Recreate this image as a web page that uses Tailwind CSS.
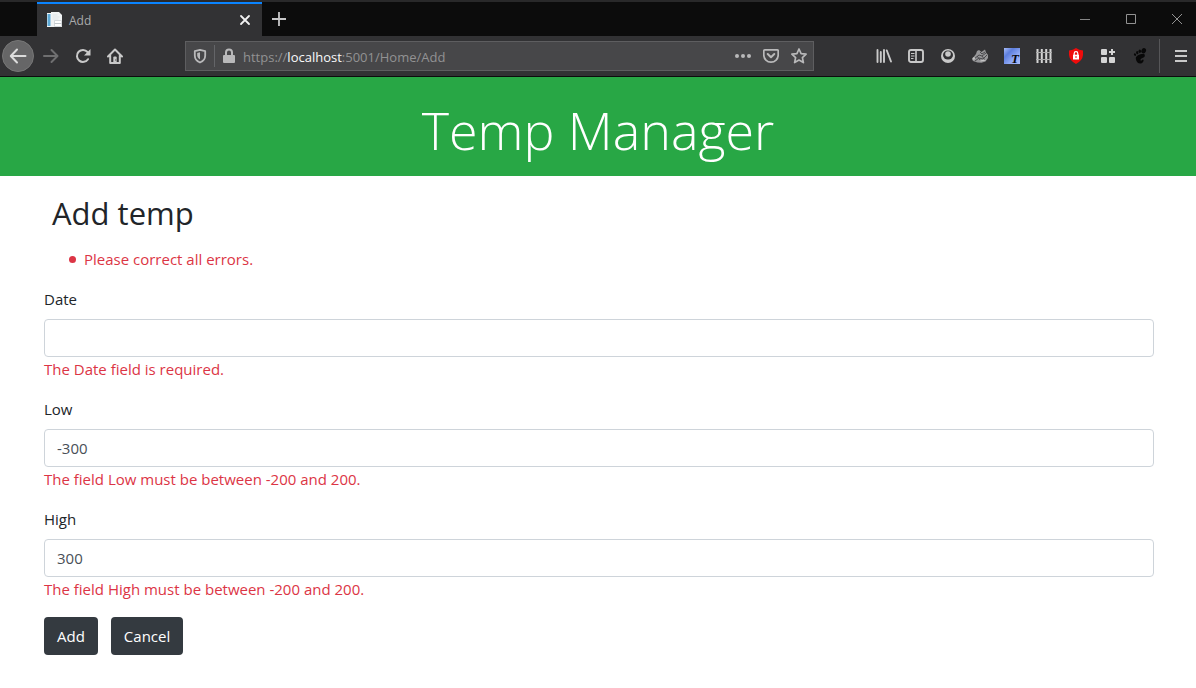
<!DOCTYPE html>
<html lang="en">
<head>
<meta charset="utf-8">
<meta name="viewport" content="width=device-width, initial-scale=1">
<title>Add</title>
<script src="https://cdn.jsdelivr.net/npm/@tailwindcss/browser@4"></script>
</head>
<body class="min-h-screen bg-white font-['Open_Sans','Noto_Sans',sans-serif] text-[15px] leading-6 text-[#212529]">

<!-- Browser window chrome -->
<div class="border-b border-[#0c0c0d] bg-[#323234] text-[#b4b4b5]">
  <div class="flex h-9 border-t-2 border-[#29292a] bg-[#0c0c0c]">
    <div class="ml-[37px] flex w-[225px] items-center border-t-2 border-[#0a84ff] bg-[#323234] pr-2 pl-[9px]">
      <svg class="size-[18px] shrink-0" viewBox="0 0 18 18" aria-hidden="true">
        <path d="M1 2h9l2 2v12H1z" fill="#f4f6f7"/><path d="M1.500 3h3v12h-3z" fill="#5da9d6"/>
        <path d="M5 1h8l3 3v12H5z" fill="#f1f3f4"/><path d="M6.500 4h5M6.500 6h7M6.500 8h6" stroke="#dfe4e7"/>
        <path d="M8.500 9.500h7v6h-7z" fill="#fff" stroke="#d5dadd"/><path d="M8.500 12.500h7" stroke="#c2c8cc"/>
      </svg>
      <span class="ml-[5px] flex-1 pt-px text-xs text-[#a9a9aa]">Add</span>
      <button class="flex size-[18px] items-center justify-center" aria-label="Close tab">
        <svg class="size-[18px]" viewBox="0 0 18 18"><path d="M5 5l8 8M13 5L5 13" stroke="#f2f2f2" stroke-width="1.800" stroke-linecap="round"/></svg>
      </button>
    </div>
    <button class="flex w-[34px] items-center justify-center" aria-label="New tab">
      <svg class="size-4" viewBox="0 0 16 16"><path d="M8 1v14M1 8h14" stroke="#c6c6c7" stroke-width="1.800"/></svg>
    </button>
    <div class="ml-auto flex">
      <button class="flex w-[46px] items-center justify-center" aria-label="Minimize"><svg class="size-3" viewBox="0 0 12 12"><path d="M1 6.500h10" stroke="#858585"/></svg></button>
      <button class="flex w-[46px] items-center justify-center" aria-label="Maximize"><svg class="size-3" viewBox="0 0 12 12"><path d="M1.500 1.500h9v9h-9z" stroke="#929292" fill="none"/></svg></button>
      <button class="flex w-[42px] items-center justify-end pr-[13px]" aria-label="Close"><svg class="size-3" viewBox="0 0 12 12"><path d="M1 1l10 10M11 1L1 11" stroke="#929292"/></svg></button>
    </div>
  </div>

  <div class="flex h-10 items-center">
    <button class="ml-[2px] flex size-8 items-center justify-center rounded-full border border-[#777] bg-[#666667]" aria-label="Back">
      <svg class="size-[18px]" viewBox="0 0 18 18"><path d="M16.500 9H2M8 2.500L1.800 9 8 15.500" fill="none" stroke="#dcdcdc" stroke-width="2" stroke-linecap="round" stroke-linejoin="round"/></svg>
    </button>
    <button class="ml-px flex size-8 items-center justify-center" aria-label="Forward">
      <svg class="size-4" viewBox="0 0 16 16"><path d="M1 8h13M8.500 2l6 6-6 6" fill="none" stroke="#6f6f70" stroke-width="2" stroke-linecap="round" stroke-linejoin="round"/></svg>
    </button>
    <button class="flex size-8 items-center justify-center" aria-label="Reload">
      <svg class="size-4" viewBox="0 0 16 16"><path d="M13 11.200A6 6 0 1 1 12.500 4" fill="none" stroke="#c9c9c9" stroke-width="2" stroke-linecap="round"/><path d="M15.500 1v6.500H9z" fill="#c9c9c9"/></svg>
    </button>
    <button class="flex size-8 items-center justify-center" aria-label="Home">
      <svg class="size-4" viewBox="0 0 16 16"><path d="M1 8.500L8 1.500l7 7M3.200 7.500V15h9.600V7.500" fill="none" stroke="#c9c9c9" stroke-width="2" stroke-linecap="round" stroke-linejoin="round"/><path d="M6.300 15V9.500q0-1 1-1h1.400q1 0 1 1V15z" fill="#c9c9c9"/><path d="M8.200 11.500h1v1h-1z" fill="#323234"/></svg>
    </button>
    <div class="ml-[54px] flex h-[30px] flex-1 items-center border border-[#5e5e60] bg-[#474749]">
      <button class="flex h-[22px] w-[29px] items-center justify-center border-r border-[#646568]" aria-label="Tracking protection">
        <svg class="size-4" viewBox="0 0 16 16"><path d="M8 1.800l5.200 1.400v4.300C13.200 11 11 13.300 8 14.500 5 13.300 2.800 11 2.800 7.500V3.200z" fill="none" stroke="#b9b9ba" stroke-width="1.800" stroke-linejoin="round"/><path d="M8 4.300v7.200C6 10.300 5.200 9 5.200 7.200V5z" fill="#b9b9ba"/></svg>
      </button>
      <svg class="ml-[6px] size-4 shrink-0" viewBox="0 0 16 16" aria-hidden="true"><path d="M5 7V4.500a3 3 0 0 1 6 0V7" fill="none" stroke="#b9b9ba" stroke-width="2"/><rect x="2" y="7" width="12" height="8" rx="1" fill="#b9b9ba"/></svg>
      <div class="ml-[6px] flex-1 pt-[2px] text-[13px] text-[#929293]" role="textbox" aria-label="Address">https://<span class="text-[#f9f9fa]">localhost</span>:5001/Home/Add</div>
      <button class="flex size-7 items-center justify-center" aria-label="Page actions"><svg class="size-4" viewBox="0 0 16 16" fill="#b9b9ba"><circle cx="2" cy="8" r="2"/><circle cx="8" cy="8" r="2"/><circle cx="14" cy="8" r="2"/></svg></button>
      <button class="flex size-7 items-center justify-center" aria-label="Save to Pocket"><svg class="size-4" viewBox="0 0 16 16" fill="none" stroke="#b9b9ba" stroke-linecap="round" stroke-linejoin="round"><path d="M1.800 1.900h12.400q1 0 1 1V7A7 7 0 0 1 .8 7V2.900q0-1 1-1z" stroke-width="1.700"/><path d="M4.700 6L8 9.200 11.300 6" stroke-width="2"/></svg></button>
      <button class="flex size-7 items-center justify-center" aria-label="Bookmark this page"><svg class="size-4" viewBox="0 0 16 16"><path d="M8 1l2.100 4.600 5 .6-3.700 3.400 1 5L8 12.100l-4.400 2.500 1-5L.9 6.200l5-.6z" fill="none" stroke="#b9b9ba" stroke-width="1.700" stroke-linejoin="round"/></svg></button>
    </div>
    <div class="ml-[54px] flex">
      <button class="flex size-8 items-center justify-center" aria-label="Library"><svg class="size-4" viewBox="0 0 16 16"><path d="M1.500 2v12M4.800 4v10M8 2v12M10.800 2.500l4.200 11" stroke="#c9c9c9" stroke-width="1.900" stroke-linecap="round"/></svg></button>
      <button class="flex size-8 items-center justify-center" aria-label="Sidebars"><svg class="size-4" viewBox="0 0 16 16"><rect x="1" y="2" width="14" height="12" rx="2" fill="none" stroke="#c9c9c9" stroke-width="1.900"/><path d="M8 2v12" stroke="#c9c9c9" stroke-width="1.600"/><path d="M3 5.500h3.500M3 8h3.500M3 10.500h2.500" stroke="#c9c9c9"/></svg></button>
      <button class="flex size-8 items-center justify-center" aria-label="Account"><svg class="size-4" viewBox="0 0 16 16"><circle cx="8" cy="8" r="7" fill="#c9c9c9"/><ellipse cx="8" cy="7" rx="5" ry="4.500" fill="#323234"/><circle cx="8" cy="6" r="2.800" fill="#c9c9c9"/></svg></button>
      <button class="flex size-8 items-center justify-center" aria-label="Privacy Badger"><svg class="size-4" viewBox="0 0 16 16"><path d="M0 11L4 6l1-3 2-1L9.500 4 13 1.500l1 3L16 7v3l-2.500 3.500-4 1.300-4-.3L1 13z" fill="#969698"/><path d="M2 11l5-4 3 1 4-3M3 13l4-3 4 1 4-4M8 4l2 2 3-2M5 8l3 4M10 8l3 4" stroke="#4a4a4d" fill="none"/><circle cx="1.800" cy="10.500" r="1.200" fill="#c4c4c4"/><path d="M8.500 13l5-1" stroke="#ccc"/></svg></button>
      <button class="flex size-8 items-center justify-center" aria-label="Text tool"><svg class="size-4" viewBox="0 0 16 16"><defs><linearGradient id="sky" x1="0" y1="0" x2="1" y2="1"><stop stop-color="#a8bdf7"/><stop offset="0.300" stop-color="#5d7ede"/><stop offset="0.650" stop-color="#90aaf5"/><stop offset="1" stop-color="#a6bbfa"/></linearGradient></defs><path d="M0 0h16v16H0z" fill="url(#sky)"/><text x="7" y="14.500" font-family="Liberation Serif" font-size="13" font-style="italic" font-weight="700" fill="#08080f">T</text></svg></button>
      <button class="flex size-8 items-center justify-center" aria-label="Fence extension"><svg class="size-4" viewBox="0 0 16 16"><path d="M1.500 1v14M5.800 1v14M10.200 1v14M14.500 1v14" stroke="#d4d4d4" stroke-width="2"/><path d="M0 4.500h16M0 11.500h16" stroke="#aaa"/></svg></button>
      <button class="flex size-8 items-center justify-center" aria-label="Ad blocker"><svg class="size-4" viewBox="0 0 16 16"><path d="M8 0q3 2.300 7 2.500V7q-.5 5.500-7 9Q1.500 12.500 1 7V2.500Q5 2.300 8 0z" fill="#f00b0b"/><path d="M6.200 7V5.500a1.800 1.800 0 0 1 3.600 0V7" fill="none" stroke="#fff" stroke-width="1.200"/><path d="M5 6.700h6v4.800H5z" fill="#fff"/><path d="M8 8v2" stroke="#e11"/></svg></button>
      <button class="flex size-8 items-center justify-center" aria-label="Extensions"><svg class="size-4" viewBox="0 0 16 16" fill="#d4d4d4"><rect x="1" y="1" width="6" height="6" rx="1"/><rect x="1" y="9" width="6" height="6" rx="1"/><rect x="9" y="9" width="6" height="6" rx="1"/><path d="M11 1h2v2h2v2h-2v2h-2V5H9V3h2z"/></svg></button>
      <button class="flex size-8 items-center justify-center" aria-label="GNOME Shell integration"><svg class="size-4" viewBox="0 0 16 16" fill="#080808"><ellipse cx="11.700" cy="2.800" rx="2.200" ry="2.700" transform="rotate(25 11.700 2.800)"/><ellipse cx="7.800" cy="3.300" rx="1.300" ry="1.800"/><ellipse cx="5.200" cy="4.700" rx="1.100" ry="1.600" transform="rotate(-15 5.200 4.700)"/><ellipse cx="3" cy="6.600" rx="1" ry="1.400" transform="rotate(-30 3 6.600)"/><path d="M12 6C8.500 5.500 3.500 7.500 3.800 10.500 4 13.500 6 15.500 8.300 15.500c2.200 0 3.500-2 3.300-3.500-.1-.9-1.300-.7-1.700.1-.6 1.200-1.700.5-1.300-.6.500-1.500 4.200-1.500 4.200-3.700 0-1-.2-1.700-.8-1.800z"/></svg></button>
    </div>
    <div class="ml-[3px] h-[34px] w-px bg-[#565658]"></div>
    <button class="ml-1 flex size-8 items-center justify-center" aria-label="Open menu"><svg class="size-4" viewBox="0 0 16 16"><path d="M3 3h12M3 8h12M3 13h12" stroke="#c9c9c9" stroke-width="2"/></svg></button>
  </div>
</div>

<!-- Page -->
<header class="bg-[#28a745] pt-[19px] pb-[13px] text-center text-white">
  <h1 class="text-[52px] leading-[67px] font-light">Temp Manager</h1>
</header>

<main class="pt-[10px] pr-[42px] pl-11">
  <h2 class="m-2 text-[31px] leading-[38px]">Add temp</h2>
  <ul class="mt-[15px] mb-4 pl-[25px] text-[#dc3545]">
    <li class="flex items-center gap-2 before:size-[7px] before:rounded-full before:bg-[#dc3545]">Please correct all errors.</li>
  </ul>
  <form>
    <div class="mb-4">
      <label for="date" class="mb-2 block">Date</label>
      <input id="date" type="text" class="block h-[38px] w-full rounded-sm border border-[#ced4da] px-3 text-[#495057]">
      <span class="block text-[#dc3545]">The Date field is required.</span>
    </div>
    <div class="mb-4">
      <label for="low" class="mb-2 block">Low</label>
      <input id="low" type="text" value="-300" class="block h-[38px] w-full rounded-sm border border-[#ced4da] px-3 text-[#495057]">
      <span class="block text-[#dc3545]">The field Low must be between -200 and 200.</span>
    </div>
    <div class="mb-4">
      <label for="high" class="mb-2 block">High</label>
      <input id="high" type="text" value="300" class="block h-[38px] w-full rounded-sm border border-[#ced4da] px-3 text-[#495057]">
      <span class="block text-[#dc3545]">The field High must be between -200 and 200.</span>
    </div>
    <div class="flex gap-[13px] text-white">
      <button type="submit" class="h-[38px] rounded-sm bg-[#343a40] px-[13px]">Add</button>
      <a href="#" class="h-[38px] rounded-sm bg-[#343a40] px-[13px] leading-[38px]">Cancel</a>
    </div>
  </form>
</main>
</body>
</html>
